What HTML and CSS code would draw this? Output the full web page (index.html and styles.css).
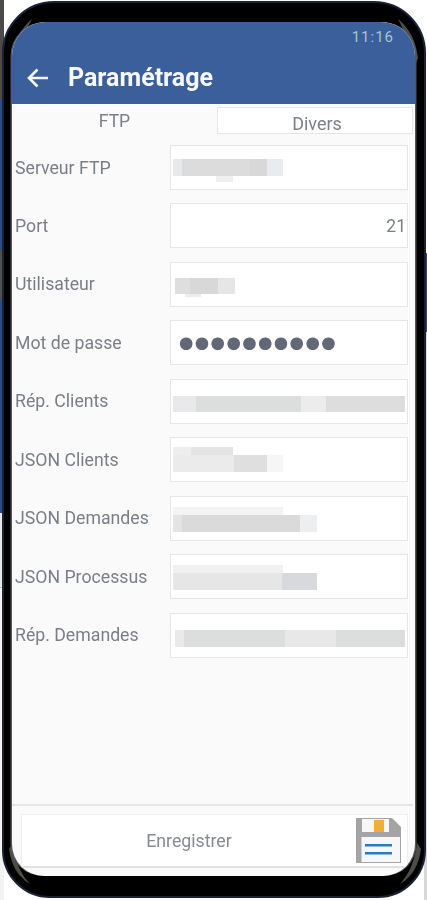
FILE: index.html
```html
<!DOCTYPE html>
<html lang="fr">
<head>
<meta charset="utf-8">
<title>Paramétrage</title>
<link rel="stylesheet" href="styles.css">
</head>
<body>
<div class="stage">
  <div class="phone">
    <svg class="glints" width="422" height="895" viewBox="0 0 422 895" aria-hidden="true">
      <path d="M9 55C10 38 16 26 28 16C22 28 15 40 11 60Z"/>
      <path d="M414 55C412 38 406 26 394 16C400 28 407 40 412 60Z"/>
      <path d="M5 846C7 862 14 874 26 881C18 872 12 862 9 840Z"/>
      <path d="M417 846C415 862 408 874 396 881C404 872 410 862 413 840Z"/>
    </svg>
    <div class="screen">
      <header class="appbar">
        <div class="time">11:16</div>
        <div class="titlebar">
          <svg class="back" width="24" height="22" viewBox="0 0 24 22" aria-hidden="true">
            <path d="M22 11H3M11.500 2.500L3 11l8.500 8.500" fill="none" stroke="#f4f6fa" stroke-width="2.600"/>
          </svg>
          <h1 class="title">Paramétrage</h1>
        </div>
      </header>
      <nav class="tabs">
        <div class="tab tab-on">FTP</div>
        <div class="tab tab-off">Divers</div>
      </nav>
      <main class="form">
        <div class="row"><span class="label">Serveur FTP</span><div class="input"><div class="mask m-server"></div><div class="mask m-server2"></div></div></div>
        <div class="row"><span class="label">Port</span><div class="input input-num">21</div></div>
        <div class="row"><span class="label">Utilisateur</span><div class="input"><div class="mask m-user"></div><div class="mask m-user2"></div></div></div>
        <div class="row"><span class="label">Mot de passe</span><div class="input input-pass">●●●●●●●●●●</div></div>
        <div class="row"><span class="label">Rép. Clients</span><div class="input"><div class="mask m-rep"></div></div></div>
        <div class="row"><span class="label">JSON Clients</span><div class="input"><div class="mask m-jc1"></div><div class="mask m-jc2"></div></div></div>
        <div class="row"><span class="label">JSON Demandes</span><div class="input"><div class="mask m-jd1"></div><div class="mask m-jd2"></div></div></div>
        <div class="row"><span class="label">JSON Processus</span><div class="input"><div class="mask m-jp1"></div><div class="mask m-jp2"></div></div></div>
        <div class="row"><span class="label">Rép. Demandes</span><div class="input"><div class="mask m-rd"></div></div></div>
      </main>
      <footer class="footer">
        <div class="save">
          <span class="save-label">Enregistrer</span>
          <svg class="save-icon" width="45" height="46" viewBox="0 0 45 46" aria-hidden="true">
            <path d="M0 0H36L45 9V45H0Z" fill="#a4a4a6"/>
            <path d="M6 1H33V14H6Z" fill="#f7f7f7"/>
            <rect x="18" y="2" width="10" height="12" fill="#edb034"/>
            <rect x="5.500" y="19" width="38.500" height="25" fill="#f6f7f8"/>
            <rect x="9" y="26" width="27" height="2.500" fill="#2f7ab5"/>
            <rect x="9" y="34" width="27" height="2.500" fill="#2f7ab5"/>
          </svg>
        </div>
      </footer>
    </div>
  </div>
</div>
</body>
</html>
```

FILE: styles.css
```css
* { box-sizing: border-box; }
html, body { margin: 0; padding: 0; }
body { font-family: Roboto, "Liberation Sans", sans-serif; }

.stage {
  width: 427px;
  height: 900px;
  overflow: hidden;
  padding: 1px 1px 2px 2px;
  background:
    linear-gradient(#4b4a48 0 100px, #2a4f86 100px 250px, #4f4f50 250px 300px, #2a4f86 300px 513px, #e8e8e8 513px 587px, #bdbdbd 587px 588px, #f2f2f2 588px) left top / 4px 100% no-repeat,
    linear-gradient(#fff 0 253px, #2a4a7e 253px 332px, #d8d8d8 332px) right top / 3px 100% no-repeat,
    #fff;
}

.phone {
  position: relative;
  width: 424px;
  height: 897px;
  padding: 19px 9px 20px 8px;
  background: #000;
  border: 2px solid #1b2236;
  border-radius: 52px 52px 48px 48px;
}
.glints { position: absolute; left: 0; top: 0; }
.glints path { fill: #4c4c49; }

.screen {
  display: flex;
  flex-direction: column;
  width: 403px;
  height: 854px;
  overflow: hidden;
  background: #fafafa;
  border-radius: 34px 34px 32px 32px;
  box-shadow: -1.500px 0 0 #55565a, 1.500px 0 0 #55565a;
  filter: blur(0.5px);
}

.appbar {
  flex: none;
  height: 82px;
  background: #3a5f9a;
  display: flex;
  flex-direction: column;
}
.time {
  align-self: flex-end;
  margin: 6px 21px 0 0;
  font-size: 15px;
  line-height: 18px;
  letter-spacing: 1px;
  color: #a9c3d6;
}
.titlebar {
  display: flex;
  align-items: center;
  margin-top: 17px;
  padding-left: 14px;
}
.back { flex: none; }
.title {
  margin: 0 0 0 18px;
  font-size: 25px;
  line-height: 30px;
  font-weight: 700;
  color: #f6f8fb;
}

.tabs {
  flex: none;
  display: flex;
  height: 30px;
  margin-right: 2px;
  border-top: 1px solid #fff;
}
.tab {
  font-size: 17.500px;
  text-align: center;
  color: #7c8088;
}
.tab-on {
  width: 205px;
  padding-top: 6px;
  line-height: 20px;
}
.tab-off {
  flex: 1;
  margin-top: 2px;
  padding: 6px 0 0 4px;
  line-height: 20px;
  font-size: 18px;
  background: #fff;
  border: 1px solid #e6e6e6;
}

.form {
  flex: 1;
  display: flex;
  flex-direction: column;
  gap: 13.440px;
  padding: 11px 7px 0 3px;
}
.row {
  display: flex;
  align-items: center;
  height: 45px;
}
.label {
  flex: none;
  width: 155px;
  font-size: 17.700px;
  color: #7a7f87;
  white-space: nowrap;
}
.input {
  flex: 1;
  height: 45px;
  background: #fff;
  border: 1px solid #e6e6e6;
  display: flex;
  flex-direction: column;
  justify-content: center;
  align-items: flex-start;
  padding-left: 2px;
}
.input-num {
  align-items: flex-end;
  padding: 0 1px 0 0;
  font-size: 17.500px;
  color: #7a7f87;
}
.input-pass {
  padding-left: 8px;
  font-family: "DejaVu Sans", sans-serif;
  font-size: 16.500px;
  letter-spacing: 1.400px;
  color: #636877;
}

.mask { flex: none; filter: blur(0.7px); }
.m-server {
  width: 110px; height: 17px; margin-top: 6px;
  background: linear-gradient(90deg, #e8e9eb 0 8%, #dcdcdc 8% 70%, #d8d8d8 70% 85%, #e8ebef 85%);
}
.m-server2 {
  width: 17px; height: 6px; margin-left: 43px; background: #f0f0f0;
}
.m-user {
  width: 60px; height: 16px; margin: 6px 0 0 2px;
  background: linear-gradient(90deg, #dedede 0 25%, #d8d8d8 25% 72%, #e4e6e8 72%);
}
.m-user2 {
  width: 16px; height: 3px; margin-left: 12px; background: #ececec;
}
.m-rep {
  width: 232px; height: 16px; margin-top: 6px;
  background: linear-gradient(90deg, #e9e9eb 0 10%, #dcdddd 10% 55%, #ececec 55% 66%, #dddddd 66%);
}
.m-jc1 {
  width: 60px; height: 8px;
  background: linear-gradient(90deg, #eeeeee 0 30%, #e4e4e4 30%);
}
.m-jc2 {
  width: 110px; height: 17px;
  background: linear-gradient(90deg, #ebebeb 0 55%, #dfdfdf 55% 85%, #f6f6f6 85%);
}
.m-jd1 {
  width: 110px; height: 8px; margin-top: 2px; background: #f3f3f3;
}
.m-jd2 {
  width: 144px; height: 17px;
  background: linear-gradient(90deg, #e4e4e4 0 6%, #dadada 6% 88%, #eceef0 88%);
}
.m-jp1 {
  width: 110px; height: 8px; margin-top: 2px; background: #f1f1f1;
}
.m-jp2 {
  width: 144px; height: 17px;
  background: linear-gradient(90deg, #e6e6e6 0 76%, #d8d9dc 76%);
}
.m-rd {
  width: 230px; height: 17px; margin: 6px 0 0 2px;
  background: linear-gradient(90deg, #eaeaea 0 4%, #dcdddd 4% 48%, #e8e8e8 48% 70%, #dcdddd 70%);
}

.footer {
  flex: none;
  height: 72px;
  margin-right: 2px;
  border-top: 2px solid #e6e6e6;
  padding: 8px 5px 0 9px;
}
.save {
  display: flex;
  align-items: center;
  height: 54px;
  background: #fff;
  border: 1px solid #efefef;
  border-bottom: 2px solid #e2e2e2;
}
.save-label {
  flex: 1;
  text-align: center;
  font-size: 17.700px;
  color: #868a94;
}
.save-icon { flex: none; margin-right: 6px; }
```
